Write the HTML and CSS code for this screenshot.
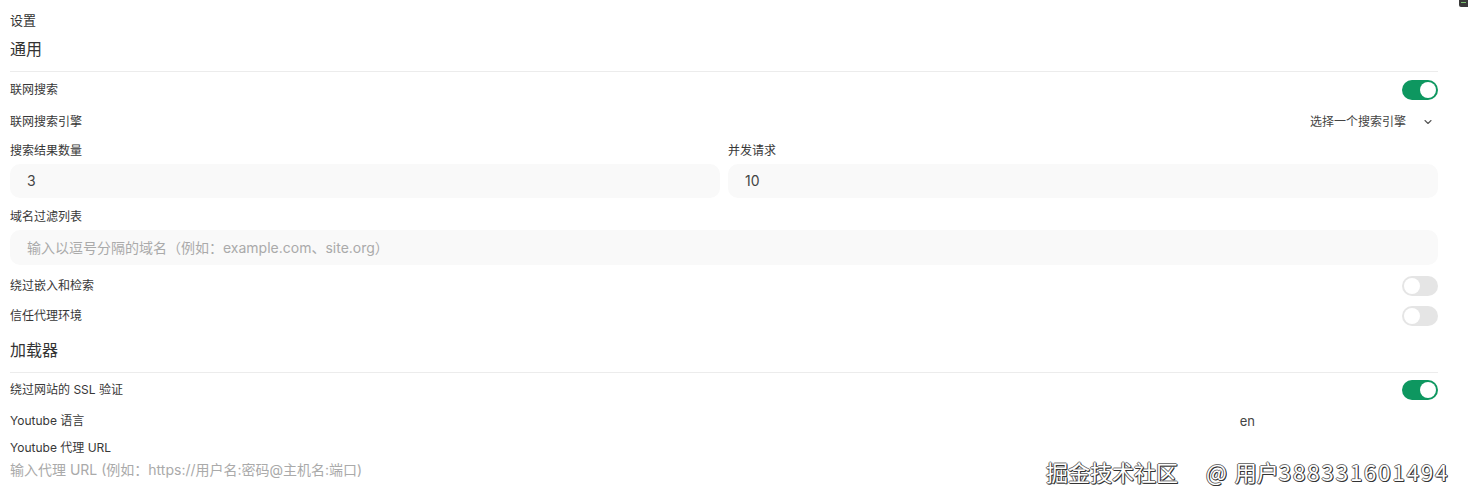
FILE: index.html
```html
<!DOCTYPE html>
<html lang="zh-CN">
<head>
<meta charset="utf-8">
<title>设置</title>
<link rel="stylesheet" href="styles.css">
</head>
<body>
<div class="page">
  <div class="title">设置</div>

  <div class="section-h">通用</div>
  <div class="divider"></div>

  <div class="row r-web">
    <span class="label">联网搜索</span>
    <span class="toggle on"><span class="knob"></span></span>
  </div>

  <div class="row r-engine">
    <span class="label">联网搜索引擎</span>
    <span class="select">选择一个搜索引擎
      <svg class="chev" width="10" height="10" viewBox="0 0 10 10"><path d="M2 3.5 L5 6.5 L8 3.5" fill="none" stroke="#555" stroke-width="1.1" stroke-linecap="round" stroke-linejoin="round"/></svg>
    </span>
  </div>

  <div class="grid2">
    <div class="col">
      <div class="field-label">搜索结果数量</div>
      <div class="input">3</div>
    </div>
    <div class="col">
      <div class="field-label">并发请求</div>
      <div class="input">10</div>
    </div>
  </div>

  <div class="field-label fl-domain">域名过滤列表</div>
  <div class="input placeholder">输入以逗号分隔的域名（例如：example.com、site.org）</div>

  <div class="row r-bypass">
    <span class="label">绕过嵌入和检索</span>
    <span class="toggle"><span class="knob"></span></span>
  </div>
  <div class="row r-trust">
    <span class="label">信任代理环境</span>
    <span class="toggle"><span class="knob"></span></span>
  </div>

  <div class="section-h sh-loader">加载器</div>
  <div class="divider"></div>

  <div class="row r-ssl">
    <span class="label">绕过网站的 SSL 验证</span>
    <span class="toggle on"><span class="knob"></span></span>
  </div>
  <div class="row r-lang">
    <span class="label">Youtube 语言</span>
    <span class="value">en</span>
  </div>
  <div class="field-label fl-proxy">Youtube 代理 URL</div>
  <div class="plain-ph">输入代理 URL (例如：https://用户名:密码@主机名:端口)</div>
</div>

<div class="corner-mark"><span></span></div>
<div class="watermark">掘金技术社区<span class="at">@</span>用户<span class="digits">388331601494</span></div>
</body>
</html>
```

FILE: styles.css
```css
html, body {
  margin: 0;
  padding: 0;
  background: #ffffff;
}
body {
  font-family: Inter, "Noto Sans CJK SC", "Noto Sans", sans-serif;
  color: #333;
  width: 1468px;
  height: 503px;
  overflow: hidden;
  position: relative;
}
.page {
  padding: 12px 30px 0 10px;
}
.title {
  font-size: 13px;
  line-height: 16px;
  color: #333;
}
.section-h {
  font-size: 16px;
  line-height: 24px;
  margin-top: 9px;
  color: #333;
}
.sh-loader { margin-top: 12px; }
.divider {
  height: 1px;
  background: #ececec;
  margin-top: 10px;
}
.row {
  display: flex;
  align-items: center;
  justify-content: space-between;
  height: 20px;
}
.label {
  font-size: 12px;
  line-height: 16px;
  color: #383838;
}
.r-web { margin-top: 8px; }
.r-engine { margin-top: 12px; }
.r-bypass { margin-top: 11px; }
.r-trust { margin-top: 10px; }
.r-ssl { margin-top: 7px; }
.r-lang { margin-top: 11px; }

.toggle {
  width: 36px;
  height: 20px;
  border-radius: 10px;
  background: #e5e5e5;
  display: flex;
  align-items: center;
  padding: 0 2px;
  box-sizing: border-box;
  justify-content: flex-start;
}
.toggle.on {
  background: #0e9760;
  justify-content: flex-end;
}
.knob {
  width: 16px;
  height: 16px;
  border-radius: 50%;
  background: #fff;
}
.select {
  font-size: 12px;
  line-height: 16px;
  color: #444;
  display: flex;
  align-items: center;
  gap: 17px;
  margin-right: 5px;
}
.chev { display: block; }

.grid2 {
  display: grid;
  grid-template-columns: 1fr 1fr;
  column-gap: 8px;
}
.field-label {
  font-size: 12px;
  line-height: 16px;
  color: #383838;
  margin-top: 11px;
}
.fl-domain { margin-top: 11px; }
.fl-proxy { margin-top: 9px; }
.input {
  margin-top: 5px;
  height: 34px;
  border-radius: 10px;
  background: #f9f9f9;
  font-size: 14px;
  line-height: 34px;
  padding-left: 17px;
  color: #444;
}
.input.placeholder {
  color: #aaa;
  height: 35px;
  line-height: 35px;
}
.value {
  font-size: 13px;
  line-height: 16px;
  color: #444;
  margin-right: 183px;
}
.plain-ph {
  margin-top: 4px;
  font-size: 14px;
  line-height: 20px;
  color: #aaa;
}

.corner-mark {
  position: absolute;
  top: -3px;
  right: 0;
  width: 9px;
  height: 10px;
  background: #3a3a3a;
  border-radius: 2px 0 0 2px;
}
.corner-mark span {
  position: absolute;
  left: 2px;
  top: 5px;
  width: 5px;
  height: 1px;
  background: #7ac070;
}
.watermark {
  position: absolute;
  left: 1046px;
  top: 456px;
  font-family: "Noto Sans CJK SC", sans-serif;
  font-size: 22px;
  line-height: 30px;
  color: #ffffff;
  text-shadow: 1px 1px 0 #333, -1px 0 0 #666, 0 -1px 0 #777, 1px 0 0 #444, 0 1px 0 #444;
  white-space: nowrap;
}
.at { margin: 0 8px 0 28px; }
.digits { letter-spacing: 2px; }
```
